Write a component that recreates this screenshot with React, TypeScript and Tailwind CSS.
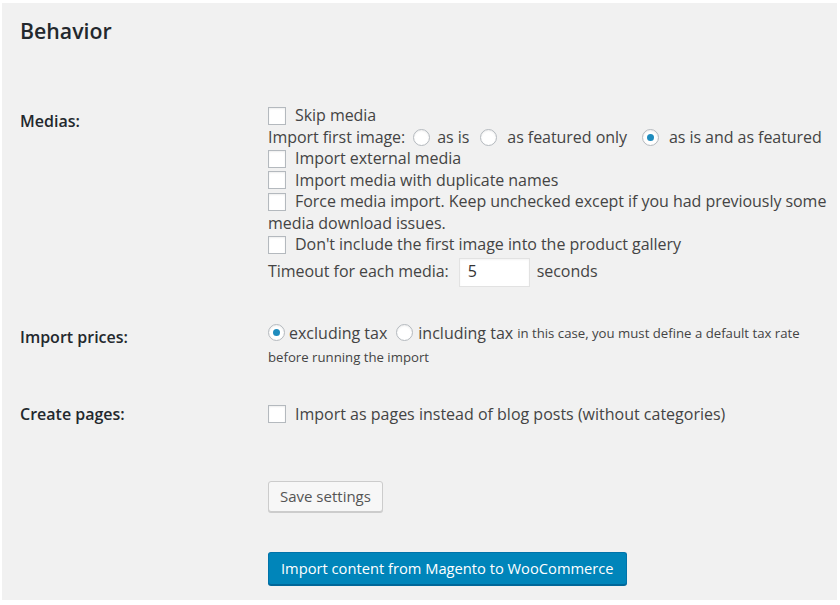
import React from "react";

function Checkbox() {
  return (
    <span className="inline-block w-[18px] h-[18px] shrink-0 border border-[#b4b9be] bg-white shadow-[inset_0_1px_2px_rgba(0,0,0,0.07)] align-middle" />
  );
}

function Radio({ checked = false }: { checked?: boolean }) {
  return (
    <span className="inline-flex w-[17px] h-[17px] shrink-0 rounded-full border border-[#b4b9be] bg-white shadow-[inset_0_1px_2px_rgba(0,0,0,0.07)] items-center justify-center align-middle">
      {checked && <span className="block w-[7px] h-[7px] rounded-full bg-[#1e8cbe]" />}
    </span>
  );
}

function CheckLine({ children }: { children: React.ReactNode }) {
  return (
    <div className="flex items-center h-[21.5px]">
      <Checkbox />
      <span className="ml-[9px]">{children}</span>
    </div>
  );
}

export default function App() {
  return (
    <div
      className="w-[840px] h-[605px] bg-white pt-[3px] pl-[2px] pr-[3px] pb-[5px] text-[#444] text-[16px]"
      style={{ fontFamily: '"Open Sans", "Noto Sans", sans-serif' }}
    >
      <div className="h-full bg-[#f1f1f1] pl-[18px] pt-[16px]">
        <h2 className="text-[21.3px] leading-[24px] font-semibold text-[#23282d]">Behavior</h2>

        {/* Medias */}
        <div className="flex mt-[62px]">
          <div className="w-[248px] pt-[6px] font-semibold text-[#23282d] leading-[21.5px]">Medias:</div>
          <div className="flex-1 leading-[21.5px] tracking-[-0.05px]">
            <CheckLine>Skip media</CheckLine>
            <div className="flex items-center h-[21.5px]">
              <span>Import first image:</span>
              <span className="ml-[8px] flex items-center"><Radio /></span>
              <span className="ml-[7px]">as is</span>
              <span className="ml-[11px] flex items-center"><Radio /></span>
              <span className="ml-[10px]">as featured only</span>
              <span className="ml-[15px] flex items-center"><Radio checked /></span>
              <span className="ml-[10px]">as is and as featured</span>
            </div>
            <CheckLine>Import external media</CheckLine>
            <CheckLine>Import media with duplicate names</CheckLine>
            <CheckLine>Force media import. Keep unchecked except if you had previously some</CheckLine>
            <div className="h-[21.5px]">media download issues.</div>
            <CheckLine>Don't include the first image into the product gallery</CheckLine>
            <div className="flex items-center mt-[2px]">
              <span>Timeout for each media:</span>
              <span className="ml-[10px] w-[71px] h-[29px] bg-white border border-[#e2e2e2] shadow-[inset_0_1px_2px_rgba(0,0,0,0.05)] pl-[8px] flex items-center text-[#333]">5</span>
              <span className="ml-[7px]">seconds</span>
            </div>
          </div>
        </div>

        {/* Import prices */}
        <div className="flex mt-[35px]">
          <div className="w-[248px] pt-[5px] font-semibold text-[#23282d] leading-[21.5px]">Import prices:</div>
          <div className="flex-1">
            <div className="flex items-center h-[22px]">
              <Radio checked />
              <span className="ml-[4px]">excluding tax</span>
              <span className="ml-[9px] flex items-center"><Radio /></span>
              <span className="ml-[5px]">including tax</span>
              <span className="ml-[4px] text-[13.2px] pt-[3px]">in this case, you must define a default tax rate</span>
            </div>
            <div className="text-[13.2px] leading-[26px]">before running the import</div>
          </div>
        </div>

        {/* Create pages */}
        <div className="flex mt-[34px]">
          <div className="w-[248px] font-semibold text-[#23282d] leading-[21.5px]">Create pages:</div>
          <div className="flex-1">
            <CheckLine>Import as pages instead of blog posts (without categories)</CheckLine>
          </div>
        </div>

        <div className="pl-[248px] mt-[56px]">
          <button className="h-[31px] px-[11px] bg-[#f7f7f7] border border-[#cccccc] rounded-[3px] shadow-[0_1px_0_#cccccc] text-[#555] text-[15px] leading-[29px]">
            Save settings
          </button>
        </div>

        <div className="pl-[248px] mt-[40px]">
          <button className="h-[33px] px-[12px] bg-[#0085ba] border border-[#0073aa] border-b-[#006799] rounded-[3px] shadow-[0_1px_0_#006799] text-white text-[14.7px] leading-[31px]">
            Import content from Magento to WooCommerce
          </button>
        </div>
      </div>
    </div>
  );
}
